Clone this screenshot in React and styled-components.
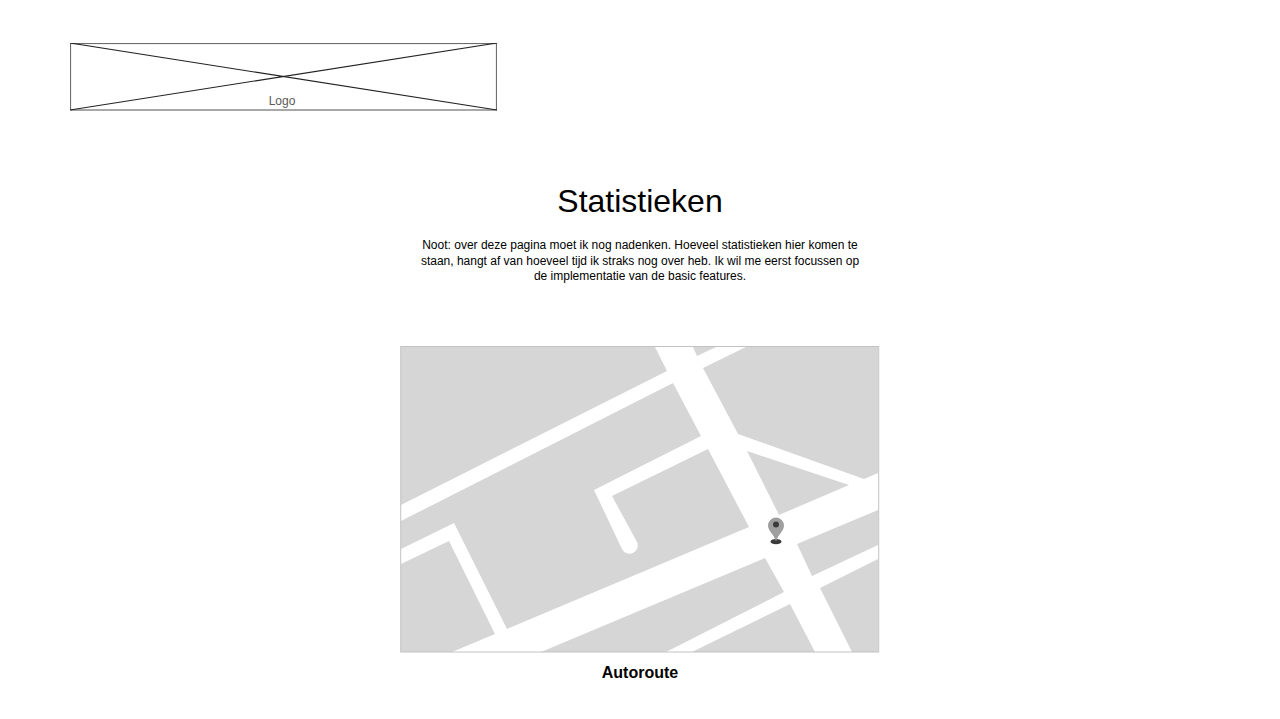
import React from 'react';
import styled, { createGlobalStyle } from 'styled-components';

const GlobalStyle = createGlobalStyle`
    html, body {
        margin: 0;
        padding: 0;
        background: #fff;
        font-family: "Liberation Sans", Arial, sans-serif;
    }
`;

const Page = styled.div`
    height: 719px;
    overflow: hidden;
    padding-top: 43px;
    box-sizing: border-box;
`;

const Header = styled.header`
    padding-left: 70px;
`;

const LogoBox = styled.div`
    position: relative;
    width: 427px;
    height: 68px;
`;

const LogoCross = styled.svg`
    display: block;
    width: 100%;
    height: 100%;
`;

const LogoLabel = styled.span`
    position: absolute;
    left: 0;
    right: 3px;
    bottom: 3px;
    text-align: center;
    font-size: 12px;
    line-height: 14px;
    color: #595959;
`;

const Main = styled.main`
    display: flex;
    flex-direction: column;
    align-items: center;
    padding-top: 71px;
`;

const Title = styled.h1`
    margin: 0;
    font-size: 32px;
    line-height: 38px;
    font-weight: 400;
    color: #000;
`;

const Note = styled.p`
    width: 444px;
    margin: 18px 0 0;
    font-size: 12px;
    line-height: 15.5px;
    text-align: center;
    color: #000;
`;

const MapFigure = styled.figure`
    display: flex;
    flex-direction: column;
    align-items: center;
    margin: 61px 0 0;
`;

const MapBox = styled.div`
    width: 480px;
    height: 307px;
`;

const MapSvg = styled.svg`
    display: block;
    width: 100%;
    height: 100%;
`;

const Caption = styled.figcaption`
    margin-top: 10px;
    font-size: 16px;
    line-height: 20px;
    font-weight: 700;
    color: #000;
`;

const blocks = [
    'M401 347 L655 347 L667 371 L401 505 Z',
    'M401 521 L673 383 L701 436 L594 490 L622 549 A8 8 0 0 0 637 542 L612 496 L708 449 L749 527 L507 629 L454 523 L401 549 Z',
    'M401 564 L449 541 L495 634 L452 652 L401 652 Z',
    'M541 652 L765 558 L784 592 L666 652 Z',
    'M692 652 L790 604 L815 652 Z',
    'M852 652 L820 588 L878 559 L878 652 Z',
    'M812 576 L797 544 L878 510 L878 545 Z',
    'M747 451 L849 485 L779 515 Z',
    'M703 368 L746 347 L878 347 L878 473 L864 479 L738 434 Z',
    'M693 347 L716 347 L697 356 Z',
];

const App = () => {
    return (
        <Page>
            <GlobalStyle />
            <Header>
                <LogoBox>
                    <LogoCross viewBox="0 0 427 68">
                        <rect x="0.5" y="0.5" width="426" height="66.5" fill="#fff" stroke="#6e6e6e" strokeWidth="1.2" />
                        <path d="M0 0 L427 67 M427 0 L0 67" stroke="#222" strokeWidth="1.1" fill="none" />
                    </LogoCross>
                    <LogoLabel>Logo</LogoLabel>
                </LogoBox>
            </Header>
            <Main>
                <Title>Statistieken</Title>
                <Note>
                    Noot: over deze pagina moet ik nog nadenken. Hoeveel statistieken hier komen te staan,
                    hangt af van hoeveel tijd ik straks nog over heb. Ik wil me eerst focussen op de
                    implementatie van de basic features.
                </Note>
                <MapFigure>
                    <MapBox>
                        <MapSvg viewBox="400 346 480 307">
                            <rect x="400" y="346" width="480" height="307" fill="#fff" />
                            {blocks.map((d) => (
                                <path key={d} d={d} fill="#d6d6d6" />
                            ))}
                            <rect x="400.7" y="346.5" width="478" height="305.5" fill="none" stroke="#c2c2c2" />
                            <ellipse cx="776" cy="541.7" rx="5.5" ry="2.6" fill="#3a3a3a" />
                            <path
                                d="M776 541 C775 534.5 768.5 531.5 768.5 525.5 A7.5 7.5 0 0 1 783.5 525.5 C783.5 531.5 777 534.5 776 541 Z"
                                fill="#a0a0a0"
                                stroke="#858585"
                                strokeWidth="0.7"
                            />
                            <circle cx="776" cy="524.5" r="3" fill="#3c3c3c" />
                        </MapSvg>
                    </MapBox>
                    <Caption>Autoroute</Caption>
                </MapFigure>
            </Main>
        </Page>
    );
};

export default App;
